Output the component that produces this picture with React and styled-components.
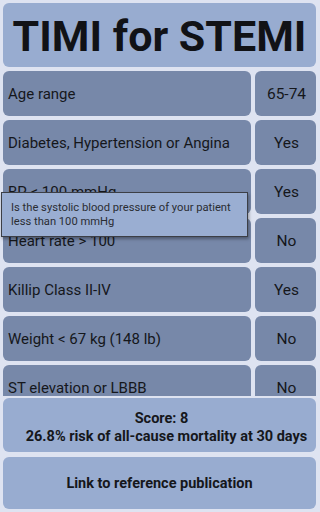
import styled, { createGlobalStyle } from 'styled-components';

const GlobalStyle = createGlobalStyle`
  html, body { margin: 0; padding: 0; background: #dee3f1; }
  body { font-family: Roboto, "Liberation Sans", sans-serif; }
  * { box-sizing: border-box; }
`;

const rows = [
  ['Age range', '65-74'],
  ['Diabetes, Hypertension or Angina', 'Yes'],
  ['BP < 100 mmHg', 'Yes'],
  ['Heart rate > 100', 'No'],
  ['Killip Class II-IV', 'Yes'],
  ['Weight < 67 kg (148 lb)', 'No'],
  ['ST elevation or LBBB', 'No'],
];

const App = () => {
  return (
    <>
      <GlobalStyle />
      <Page>
        <Header>TIMI for STEMI</Header>
        <List>
          {rows.map(([label, value]) => (
            <Row key={label}>
              <Label>{label}</Label>
              <Value>{value}</Value>
            </Row>
          ))}
        </List>
        <Card $h={54} $top={2} $pad={5}>
          <Line $shift={4}>Score: 8</Line>
          <Line $shift={14}>26.8% risk of all-cause mortality at 30 days</Line>
        </Card>
        <Card $h={52} $top={5} $pad={2}>Link to reference publication</Card>
        <Tooltip>Is the systolic blood pressure of your patient less than 100 mmHg</Tooltip>
      </Page>
    </>
  );
};

const Page = styled.div`
  position: relative;
  height: 512px;
  display: flex;
  flex-direction: column;
  padding: 3px 4px 3px 3px;
  overflow: hidden;
`;

const Header = styled.div`
  height: 64px;
  flex-shrink: 0;
  background: #98acd0;
  border-radius: 6px;
  display: flex;
  align-items: center;
  justify-content: center;
  font-weight: 700;
  font-size: 43px;
  color: #111216;
  padding-top: 1px;
`;

const List = styled.div`
  margin-top: 4px;
  height: 325px;
  flex-shrink: 0;
  overflow: hidden;
  display: flex;
  flex-direction: column;
  gap: 4px;
`;

const Row = styled.div`
  display: flex;
  gap: 4px;
  height: 45px;
  flex-shrink: 0;
`;

const Label = styled.div`
  flex: 1;
  background: #7788a9;
  border-radius: 6px;
  display: flex;
  align-items: center;
  padding-left: 5px;
  font-size: 15px;
  color: #15171b;
`;

const Value = styled.div`
  width: 61px;
  background: #7788a9;
  border-radius: 6px;
  display: flex;
  align-items: center;
  justify-content: center;
  padding-left: 2px;
  font-size: 15.5px;
  color: #15171b;
`;

const Card = styled.div`
  margin-top: ${(p) => p.$top}px;
  height: ${(p) => p.$h}px;
  flex-shrink: 0;
  background: #98acd0;
  border-radius: 6px;
  display: flex;
  flex-direction: column;
  align-items: center;
  justify-content: center;
  padding-top: ${(p) => p.$pad}px;
  text-align: center;
  font-weight: 700;
  font-size: 14.5px;
  line-height: 18px;
  color: #15171b;
`;

const Line = styled.div`
  padding-left: ${(p) => p.$shift}px;
  white-space: nowrap;
`;

const Tooltip = styled.div`
  position: absolute;
  left: 1px;
  top: 192px;
  width: 247px;
  height: 45px;
  background: #9aaed2;
  border: 1px solid #3c3f46;
  box-shadow: 1px 2px 3px rgba(0, 0, 0, 0.35);
  padding: 8px 9px;
  font-size: 11.2px;
  line-height: 14px;
  color: #2a2d33;
`;

export default App;
